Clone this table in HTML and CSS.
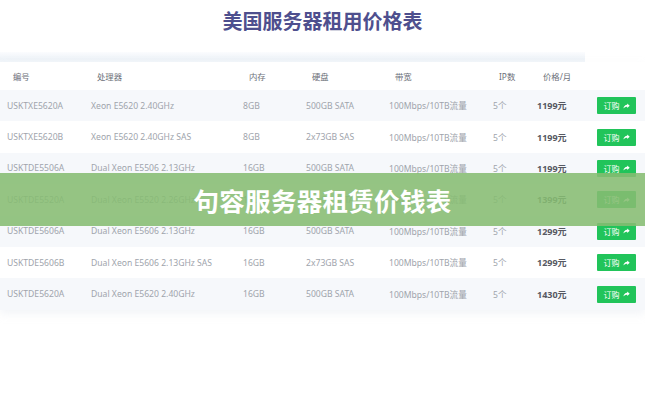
FILE: index.html
```html
<!DOCTYPE html>
<html lang="zh">
<head>
<meta charset="utf-8">
<link rel="stylesheet" href="styles.css">
</head>
<body>
<div class="page">
  <h1 class="title">美国服务器租用价格表</h1>
  <div class="band"></div>
  <div class="table">
    <div class="row head">
      <span>编号</span><span>处理器</span><span>内存</span><span>硬盘</span><span>带宽</span><span>IP数</span><span>价格/月</span><span></span>
    </div>
    <div class="row odd">
      <span>USKTXE5620A</span><span>Xeon E5620 2.40GHz</span><span>8GB</span><span>500GB SATA</span><span>100Mbps/10TB流量</span><span>5个</span><span class="price">1199元</span><span><a class="buy">订购 <svg viewBox="0 0 10 8" class="ic"><path d="M6 0.5 L9.6 3.6 L6 6.7 V4.9 C3.6 4.9 2 5.6 0.6 7.6 C1 4.6 2.8 2.6 6 2.3 Z" fill="#fff"/></svg></a></span>
    </div>
    <div class="row">
      <span>USKTXE5620B</span><span>Xeon E5620 2.40GHz SAS</span><span>8GB</span><span>2x73GB SAS</span><span>100Mbps/10TB流量</span><span>5个</span><span class="price">1199元</span><span><a class="buy">订购 <svg viewBox="0 0 10 8" class="ic"><path d="M6 0.5 L9.6 3.6 L6 6.7 V4.9 C3.6 4.9 2 5.6 0.6 7.6 C1 4.6 2.8 2.6 6 2.3 Z" fill="#fff"/></svg></a></span>
    </div>
    <div class="row odd">
      <span>USKTDE5506A</span><span>Dual Xeon E5506 2.13GHz</span><span>16GB</span><span>500GB SATA</span><span>100Mbps/10TB流量</span><span>5个</span><span class="price">1199元</span><span><a class="buy">订购 <svg viewBox="0 0 10 8" class="ic"><path d="M6 0.5 L9.6 3.6 L6 6.7 V4.9 C3.6 4.9 2 5.6 0.6 7.6 C1 4.6 2.8 2.6 6 2.3 Z" fill="#fff"/></svg></a></span>
    </div>
    <div class="row">
      <span>USKTDE5520A</span><span>Dual Xeon E5520 2.26GHz</span><span>16GB</span><span>500GB SATA</span><span>100Mbps/10TB流量</span><span>5个</span><span class="price">1399元</span><span><a class="buy">订购 <svg viewBox="0 0 10 8" class="ic"><path d="M6 0.5 L9.6 3.6 L6 6.7 V4.9 C3.6 4.9 2 5.6 0.6 7.6 C1 4.6 2.8 2.6 6 2.3 Z" fill="#fff"/></svg></a></span>
    </div>
    <div class="row odd">
      <span>USKTDE5606A</span><span>Dual Xeon E5606 2.13GHz</span><span>16GB</span><span>500GB SATA</span><span>100Mbps/10TB流量</span><span>5个</span><span class="price">1299元</span><span><a class="buy">订购 <svg viewBox="0 0 10 8" class="ic"><path d="M6 0.5 L9.6 3.6 L6 6.7 V4.9 C3.6 4.9 2 5.6 0.6 7.6 C1 4.6 2.8 2.6 6 2.3 Z" fill="#fff"/></svg></a></span>
    </div>
    <div class="row">
      <span>USKTDE5606B</span><span>Dual Xeon E5606 2.13GHz SAS</span><span>16GB</span><span>2x73GB SAS</span><span>100Mbps/10TB流量</span><span>5个</span><span class="price">1299元</span><span><a class="buy">订购 <svg viewBox="0 0 10 8" class="ic"><path d="M6 0.5 L9.6 3.6 L6 6.7 V4.9 C3.6 4.9 2 5.6 0.6 7.6 C1 4.6 2.8 2.6 6 2.3 Z" fill="#fff"/></svg></a></span>
    </div>
    <div class="row odd">
      <span>USKTDE5620A</span><span>Dual Xeon E5620 2.40GHz</span><span>16GB</span><span>500GB SATA</span><span>100Mbps/10TB流量</span><span>5个</span><span class="price">1430元</span><span><a class="buy">订购 <svg viewBox="0 0 10 8" class="ic"><path d="M6 0.5 L9.6 3.6 L6 6.7 V4.9 C3.6 4.9 2 5.6 0.6 7.6 C1 4.6 2.8 2.6 6 2.3 Z" fill="#fff"/></svg></a></span>
    </div>
  </div>
  <div class="overlay">句容服务器租赁价钱表</div>
</div>
</body>
</html>
```
FILE: styles.css
```css
* { box-sizing: border-box; }
html, body { margin: 0; padding: 0; background: #fff; }
body {
  font-family: "Noto Sans", "Noto Sans CJK SC", sans-serif;
  width: 645px;
  height: 400px;
  overflow: hidden;
}
.page { position: relative; width: 645px; height: 400px; }
.title {
  margin: 0;
  height: 52px;
  padding-top: 6px;
  text-align: center;
  font-family: "Noto Sans CJK SC", sans-serif;
  font-size: 20px;
  line-height: 30px;
  font-weight: 700;
  color: #4e4f8e;
}
.band {
  width: 585px;
  height: 10px;
  background: linear-gradient(to bottom, #fbfcfe, #eef3f8 70%, #f2f6fa);
}
.table {
  width: 645px;
  box-shadow: 0 4px 8px rgba(220, 226, 236, 0.35);
}
.row {
  display: grid;
  grid-template-columns: 84px 152px 63px 83px 104px 44px 60px 48px;
  padding-left: 7px;
  height: 31.4px;
  align-items: center;
  font-size: 8.6px;
  color: #a0a4ac;
  white-space: nowrap;
}
.row.odd { background: #f6f8fb; }
.row.head {
  height: 28px;
  color: #6c7079;
  font-size: 8.4px;
  background: #fff;
}
.row.head span { padding-left: 6px; }
.price { color: #565962; font-weight: 700; font-size: 9px; }
.buy {
  display: inline-flex;
  align-items: center;
  justify-content: center;
  gap: 3px;
  width: 39px;
  height: 17px;
  background: #21c45a;
  color: #fff;
  font-size: 8px;
  border-radius: 1px;
}
.ic { width: 7px; height: 6px; }
.overlay {
  position: absolute;
  left: 0;
  top: 173px;
  width: 645px;
  height: 53px;
  background: rgba(134, 188, 114, 0.88);
  color: #fff;
  font-family: "Noto Sans CJK SC", sans-serif;
  font-weight: 700;
  font-size: 25.5px;
  line-height: 53px;
  text-align: center;
  letter-spacing: 0.3px;
}
```
